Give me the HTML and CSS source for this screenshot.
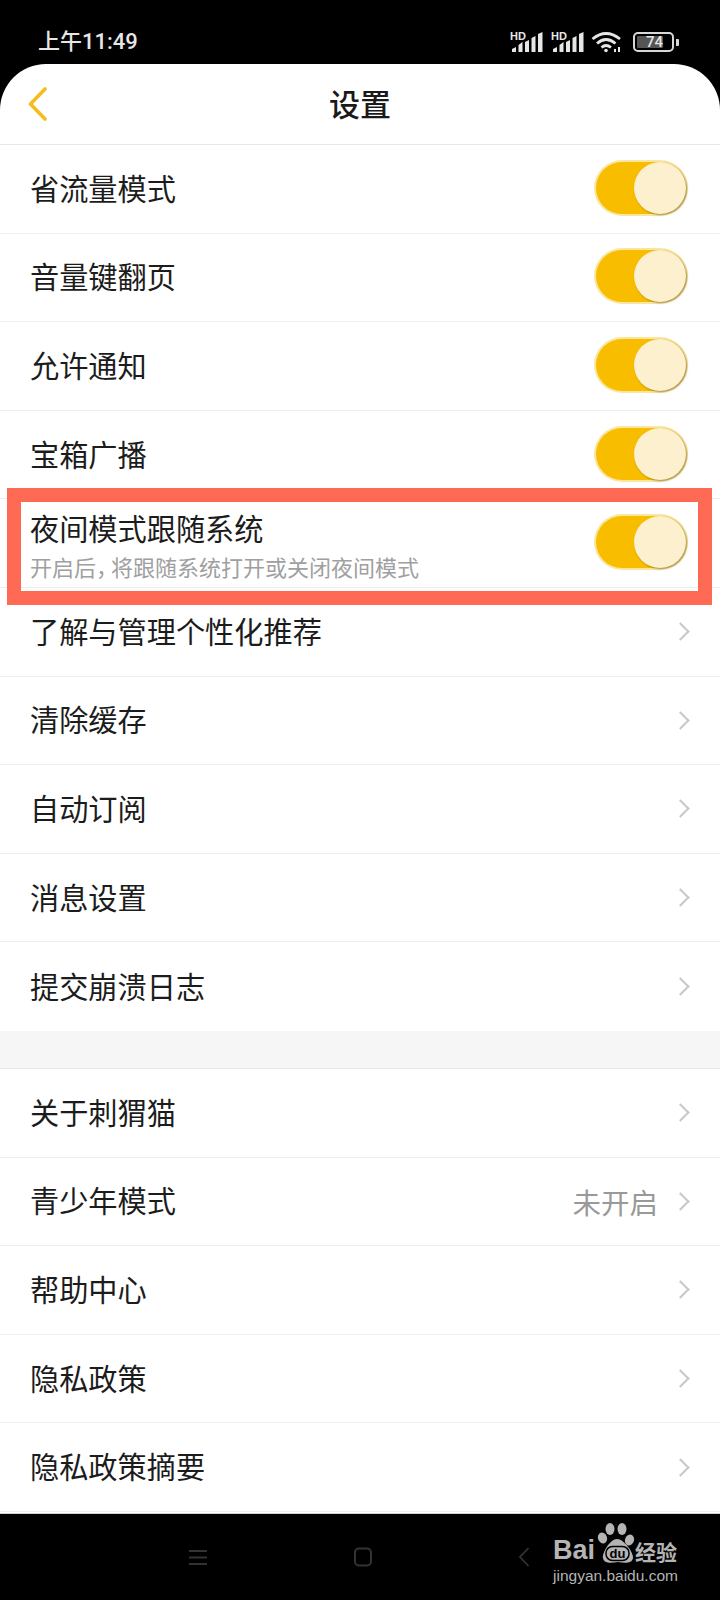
FILE: index.html
```html
<!DOCTYPE html>
<html lang="zh-CN">
<head>
  <meta charset="UTF-8">
  <title>设置</title>
  <link rel="stylesheet" href="styles.css">
</head>
<body>
  <div class="screen">
    <!-- Status bar -->
    <div class="statusbar">
      <span class="time">上午11:49</span>
      <div class="status-icons">
        <svg class="signal" width="34" height="22" viewBox="0 0 34 22">
          <text x="0" y="9" class="hd">HD</text>
          <g fill="#e6e6e6">
            <polygon points="2,21 2,18 6,16 6,21"/>
            <polygon points="8.500,21 8.500,14 12.500,11 12.500,21"/>
            <polygon points="15,21 15,11 19,9 19,21"/>
            <polygon points="21.500,21 21.500,7 25.500,5 25.500,21"/>
            <polygon points="28,21 28,3 32.500,1 32.500,21"/>
          </g>
        </svg>
        <svg class="signal" width="34" height="22" viewBox="0 0 34 22">
          <text x="0" y="9" class="hd">HD</text>
          <g fill="#e6e6e6">
            <polygon points="2,21 2,18 6,16 6,21"/>
            <polygon points="8.500,21 8.500,14 12.500,11 12.500,21"/>
            <polygon points="15,21 15,11 19,9 19,21"/>
            <polygon points="21.500,21 21.500,7 25.500,5 25.500,21"/>
            <polygon points="28,21 28,3 32.500,1 32.500,21"/>
          </g>
        </svg>
        <svg class="wifi" width="32" height="22" viewBox="0 0 32 22" fill="none" stroke="#e6e6e6" stroke-width="2.800">
          <path d="M1.500 8 Q15 -3 29 8"/>
          <path d="M6 12.500 Q15 4.500 24.500 12.500"/>
          <path d="M10.500 16.500 Q15 12.500 20 16.500"/>
          <circle cx="15" cy="19.500" r="1.800" fill="#e6e6e6" stroke="none"/>
          <path d="M24 21 L24 18 M28 21 L28 16" stroke-width="2"/>
        </svg>
        <div class="battery">
          <div class="battery-body">
            <div class="battery-fill"></div>
            <span class="battery-num">74</span>
          </div>
          <div class="battery-nub"></div>
        </div>
      </div>
    </div>

    <!-- Settings sheet -->
    <div class="sheet">
      <header class="topbar">
        <svg class="back" width="20" height="34" viewBox="0 0 20 34" fill="none" stroke="#f5bd1f" stroke-width="3.600" stroke-linecap="round" stroke-linejoin="round">
          <path d="M17 2 L2.500 17 L17 32"/>
        </svg>
        <h1>设置</h1>
      </header>

      <div class="group">
        <div class="row"><span class="label">省流量模式</span><span class="switch"><i></i></span></div>
        <div class="row"><span class="label">音量键翻页</span><span class="switch"><i></i></span></div>
        <div class="row"><span class="label">允许通知</span><span class="switch"><i></i></span></div>
        <div class="row"><span class="label">宝箱广播</span><span class="switch"><i></i></span></div>
        <div class="row">
          <div class="label-wrap">
            <span class="label">夜间模式跟随系统</span>
            <span class="sub">开启后<span class="comma">，</span>将跟随系统打开或关闭夜间模式</span>
          </div>
          <span class="switch"><i></i></span>
        </div>
        <div class="row"><span class="label">了解与管理个性化推荐</span><span class="arrow"></span></div>
        <div class="row"><span class="label">清除缓存</span><span class="arrow"></span></div>
        <div class="row"><span class="label">自动订阅</span><span class="arrow"></span></div>
        <div class="row"><span class="label">消息设置</span><span class="arrow"></span></div>
        <div class="row last"><span class="label">提交崩溃日志</span><span class="arrow"></span></div>
      </div>

      <div class="gap"></div>

      <div class="group">
        <div class="row"><span class="label">关于刺猬猫</span><span class="arrow"></span></div>
        <div class="row"><span class="label">青少年模式</span><span class="value">未开启</span><span class="arrow"></span></div>
        <div class="row"><span class="label">帮助中心</span><span class="arrow"></span></div>
        <div class="row"><span class="label">隐私政策</span><span class="arrow"></span></div>
        <div class="row"><span class="label">隐私政策摘要</span><span class="arrow"></span></div>
      </div>
    </div>

    <!-- Navigation bar -->
    <div class="navbar">
      <svg width="20" height="17" viewBox="0 0 20 17" stroke="#333" stroke-width="2"><path d="M1 2 H19 M1 8.500 H19 M1 15 H19"/></svg>
      <svg width="20" height="20" viewBox="0 0 20 20" fill="none" stroke="#333" stroke-width="2"><rect x="2" y="1.500" width="16" height="17" rx="4"/></svg>
      <svg width="12" height="20" viewBox="0 0 12 20" fill="none" stroke="#333" stroke-width="1.800"><path d="M10.500 1 L2 10 L10.500 19"/></svg>
    </div>

    <!-- Highlight drawn over the night mode row -->
    <div class="highlight"></div>

    <!-- Watermark -->
    <div class="watermark">
      <div class="wm-top">
        <span class="wm-bai">Bai</span>
        <svg class="wm-paw" width="38" height="42" viewBox="0 0 38 42">
          <g fill="#b4b4b4">
            <ellipse cx="5.500" cy="16" rx="4.500" ry="5.500" transform="rotate(-20 5.500 16)"/>
            <ellipse cx="13" cy="7" rx="4.500" ry="6"/>
            <ellipse cx="25" cy="7" rx="4.500" ry="6"/>
            <ellipse cx="32.500" cy="18" rx="4.500" ry="5.500" transform="rotate(20 32.500 18)"/>
            <path d="M20 17 C27 17 37 31 36 36 C35 42 27 41 21 40 C15 41 7 42 6 36 C5 31 13 17 20 17 Z"/>
          </g>
          <rect x="9" y="24.500" width="23" height="14" rx="6.500" fill="#b4b4b4" stroke="#000" stroke-width="1.500"/>
          <text x="20.500" y="36" class="wm-du">du</text>
        </svg>
        <span class="wm-cn">经验</span>
      </div>
      <div class="wm-url">jingyan.baidu.com</div>
    </div>
  </div>
</body>
</html>
```

FILE: styles.css
```css
* {
  box-sizing: border-box;
}
body {
  margin: 0;
  background: #000;
  font-family: "Noto Sans CJK SC", "Noto Sans", sans-serif;
}
.screen {
  position: relative;
  width: 720px;
  height: 1600px;
  display: flex;
  flex-direction: column;
  overflow: hidden;
  background: #000;
}
/* Status bar */
.statusbar {
  height: 64px;
  flex: none;
  display: flex;
  align-items: flex-start;
  justify-content: space-between;
  padding: 27px 41px 0 38px;
}
.time {
  color: #e6e6e6;
  font-size: 22px;
  line-height: 30px;
  font-weight: 500;
  font-family: "Roboto", "Noto Sans CJK SC", sans-serif;
}
.status-icons {
  display: flex;
  align-items: center;
  margin-top: 4px;
  gap: 7px;
}
.signal {
  display: block;
}
.hd {
  font: 700 11px "Liberation Sans", sans-serif;
  fill: #e6e6e6;
}
.wifi {
  display: block;
  margin-left: -1px;
  margin-right: 3px;
}
.battery {
  display: flex;
  align-items: center;
  gap: 2px;
}
.battery-body {
  position: relative;
  width: 41px;
  height: 20px;
  border: 2px solid #d8d8d8;
  border-radius: 5px;
  padding: 2px;
}
.battery-fill {
  width: 26px;
  height: 12px;
  background: #555;
  border-radius: 1px;
}
.battery-num {
  position: absolute;
  left: 11px;
  top: -1px;
  color: #e6e6e6;
  font: 500 15px/18px "Roboto", sans-serif;
}
.battery-nub {
  width: 3px;
  height: 7px;
  background: #d8d8d8;
  border-radius: 0 1px 1px 0;
}
/* Sheet */
.sheet {
  flex: none;
  background: #fff;
  border-radius: 46px 46px 0 0;
  height: 1449px;
}
.topbar {
  position: relative;
  height: 81px;
  padding-bottom: 4px;
  border-bottom: 1px solid #e8e8e8;
  display: flex;
  align-items: center;
  justify-content: center;
}
.topbar h1 {
  margin: 0;
  font-size: 31px;
  font-weight: 500;
  color: #1a1a1a;
}
.back {
  position: absolute;
  left: 28px;
  top: 23px;
}
.row {
  height: 88.6px;
  display: flex;
  align-items: center;
  padding: 0 30px 0 30px;
  border-bottom: 1px solid #eeeeee;
}
.row.last {
  border-bottom: 0;
}
.label {
  flex: 1;
  font-size: 29.2px;
  line-height: 40px;
  padding-bottom: 4px;
  color: #1c1c1c;
}
.label-wrap {
  flex: 1;
  display: flex;
  flex-direction: column;
  padding-top: 2px;
}
.label-wrap .label {
  flex: none;
  line-height: 38px;
  padding-bottom: 0;
}
.sub {
  font-size: 22px;
  line-height: 30px;
  margin-top: 5px;
  color: #a0a0a0;
}
.comma {
  letter-spacing: -7px;
}
.value {
  font-size: 28.5px;
  color: #999;
  margin-right: 16px;
}
.arrow {
  width: 13px;
  height: 13px;
  margin: 0 3px 0 0;
  border-top: 2px solid #c8c8c8;
  border-right: 2px solid #c8c8c8;
  transform: rotate(45deg);
}
.switch {
  position: relative;
  width: 90px;
  height: 52px;
  margin: 0 4px 2px 0;
  background: #f9bd00;
  border-radius: 26px;
  box-shadow: 0 0 0 2px #fbe69f;
}
.switch i {
  position: absolute;
  right: 0;
  top: 0;
  width: 52px;
  height: 52px;
  border-radius: 50%;
  background: #fdf0ce;
  box-shadow: 1px 1px 2px rgba(90, 70, 0, 0.55);
}
.gap {
  height: 38px;
  background: #f6f6f6;
  border-bottom: 1px solid #e8e8e8;
}
/* Nav bar */
.navbar {
  flex: 1;
  display: flex;
  align-items: center;
  padding: 0 190px 0 188px;
  justify-content: space-between;
  border-top: 1px solid #d0d0d0;
}
/* Overlays */
.highlight {
  position: absolute;
  left: 7px;
  top: 488px;
  width: 705px;
  height: 117px;
  border: 14px solid #ff6a55;
}
.watermark {
  position: absolute;
  left: 553px;
  top: 1522px;
  width: 130px;
  color: #b4b4b4;
}
.wm-top {
  display: flex;
  align-items: flex-end;
  height: 42px;
}
.wm-bai {
  font: 700 27px/27px "Liberation Sans", sans-serif;
  margin-right: 2px;
}
.wm-paw {
  flex: none;
  display: block;
}
.wm-du {
  font: 700 13px "Liberation Sans", sans-serif;
  fill: #000;
  text-anchor: middle;
}
.wm-cn {
  font-size: 21px;
  line-height: 26px;
  font-weight: 700;
  white-space: nowrap;
}
.wm-url {
  font: 15.5px/18px "Liberation Sans", sans-serif;
  margin-top: 3px;
  white-space: nowrap;
}
```
